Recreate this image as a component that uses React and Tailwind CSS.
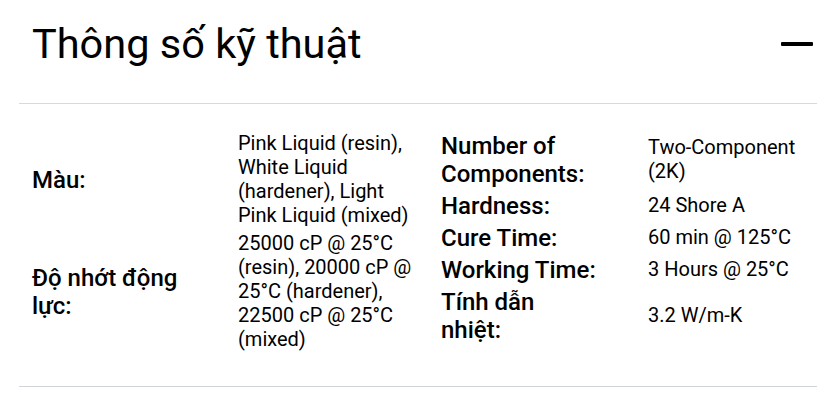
const left = [
  {
    label: "Màu:",
    value: "Pink Liquid (resin), White Liquid (hardener), Light Pink Liquid (mixed)",
  },
  {
    label: "Độ nhớt động lực:",
    value: "25000 cP @ 25°C (resin), 20000 cP @ 25°C (hardener), 22500 cP @ 25°C (mixed)",
  },
];

const right = [
  { label: "Number of Components:", value: "Two-Component (2K)" },
  { label: "Hardness:", value: "24 Shore A" },
  { label: "Cure Time:", value: "60 min @ 125°C" },
  { label: "Working Time:", value: "3 Hours @ 25°C" },
  { label: "Tính dẫn nhiệt:", value: "3.2 W/m-K" },
];

function SpecTable({ rows, cols }) {
  return (
    <div className={`grid ${cols} items-center`}>
      {rows.map((r) => (
        <div key={r.label} className="contents">
          <div className="pt-[3px] pb-[1px] pr-[50px] text-[24px] leading-[28px] font-medium text-black">{r.label}</div>
          <div className="py-[2px] text-[20px] leading-[24px] text-black">{r.value}</div>
        </div>
      ))}
    </div>
  );
}

export default function App() {
  return (
    <div className="bg-white w-[817px] h-[403px] overflow-hidden" style={{ fontFamily: "Roboto, 'Noto Sans', sans-serif" }}>
      <div className="ml-[19px]">
        <div className="flex items-center justify-between pl-[13px] pr-[4px] pt-[20px] pb-[35px] border-b border-[#d9d9d9]">
          <h2 className="text-[41.5px] leading-[48px] font-normal text-black">Thông số kỹ thuật</h2>
          <div className="w-[32px] h-[4px] bg-black rounded-[1px]" />
        </div>
        <div className="flex items-start pl-[13px] pt-[25px] pb-[33px] border-b border-[#d1d5db]">
          <div className="w-[409px]">
            <SpecTable rows={left} cols="grid-cols-[206px_183px]" />
          </div>
          <div className="w-[376px]">
            <SpecTable rows={right} cols="grid-cols-[207px_165px]" />
          </div>
        </div>
      </div>
    </div>
  );
}
